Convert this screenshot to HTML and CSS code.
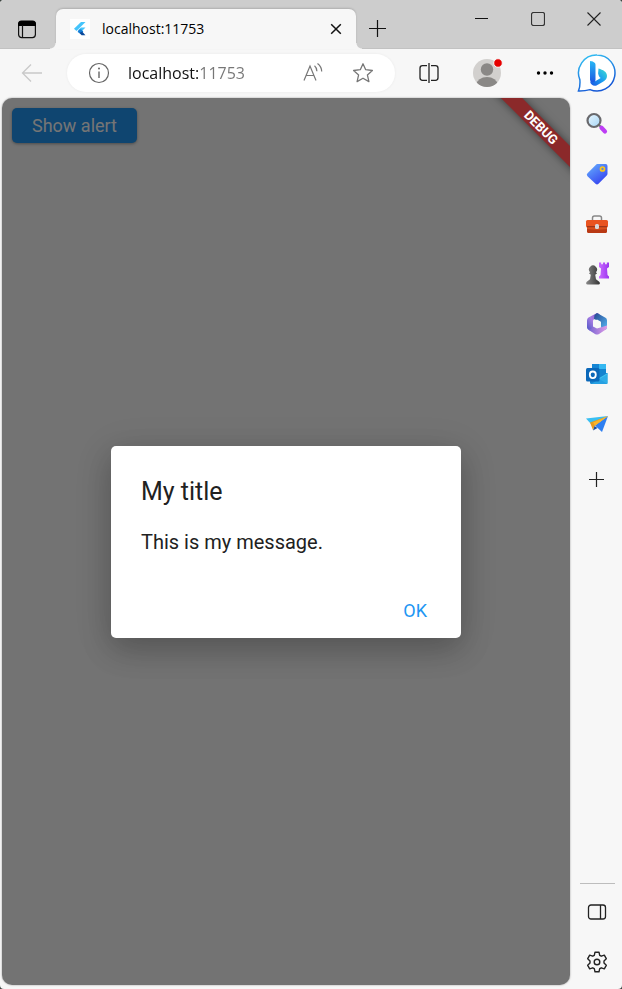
FILE: index.html
```html
<!DOCTYPE html>
<html lang="en">
<head>
<meta charset="utf-8">
<meta name="viewport" content="width=device-width, initial-scale=1">
<title>localhost:11753</title>
<link rel="stylesheet" href="styles.css">
</head>
<body>
<div class="window">
  <header class="titlebar">
    <button class="icon-button workspaces" aria-label="Tab actions">
      <svg width="20" height="20" viewBox="0 0 20 20"><rect x="1.6" y="2.6" width="16.8" height="16" rx="3" fill="none" stroke="#111" stroke-width="1.2"/><path d="M1 7V5a3.500 3.500 0 0 1 3.500-3.500h11A3.500 3.500 0 0 1 19 5v2z"/><path d="M5.500 6v12.500" stroke="#111" stroke-width="1.200"/></svg>
    </button>
    <div class="tab">
      <svg width="20" height="20" viewBox="0 0 20 20"><path fill="#fff" d="M0 0h20v20H0z"/><path fill="#45c4fb" d="M11 3h4.500L6.500 12 4 9.800z"/><path fill="#45c4fb" d="M11 8.500h4.500L11 13 8.500 10.800z"/><path fill="#1680d8" d="m8.500 11 2.500-.8 2.300 2.400-2.500 2.400-3.200-2z"/><path fill="#0b4a9b" d="m9.500 14 2.600-1.500 3.300 3.700h-3.800z"/></svg>
      <span class="tab-title">localhost:11753</span>
      <button class="icon-button tab-close" aria-label="Close tab">
        <svg width="12" height="12" viewBox="0 0 12 12"><path d="m1.200 1.200 9.600 9.600m0-9.600-9.600 9.600" stroke="#111" stroke-width="1.500"/></svg>
      </button>
    </div>
    <button class="icon-button new-tab" aria-label="New tab">
      <svg width="18" height="18" viewBox="0 0 18 18"><path d="M9.500 0v17M1 8.500h17" stroke="#111" stroke-width="1.200"/></svg>
    </button>
    <div class="window-controls">
      <button class="icon-button" aria-label="Minimize"><svg width="14" height="14" viewBox="0 0 14 14"><path d="M0 6.500h13" stroke="#111"/></svg></button>
      <button class="icon-button" aria-label="Maximize"><svg width="14" height="14" viewBox="0 0 14 14"><rect x=".5" y=".5" width="13" height="13" rx="2" fill="none" stroke="#333" stroke-width="1.200"/></svg></button>
      <button class="icon-button" aria-label="Close"><svg width="14" height="14" viewBox="0 0 14 14"><path d="m.5.5 13 13m0-13-13 13" stroke="#222" stroke-width="1.100"/></svg></button>
    </div>
  </header>

  <div class="content">
    <main class="main">
      <div class="toolbar">
        <button class="icon-button back" aria-label="Back">
          <svg width="22" height="20" viewBox="0 0 22 20" fill="none" stroke="#c9c9c9" stroke-width="1.300"><path d="M21 10H1.500M10 1.500 1.500 10l8.500 8.500"/></svg>
        </button>
        <div class="address">
          <button class="icon-button info" aria-label="Site information">
            <svg width="22" height="22" viewBox="0 0 22 22" fill="none" stroke="#666" stroke-width="1.200"><circle cx="11" cy="11" r="9.500"/><path d="M11 9.500V16" stroke-width="1.400"/><circle cx="11" cy="6.500" r="1" fill="#666" stroke="none"/></svg>
          </button>
          <input class="url" type="text" aria-label="Address" value="localhost:11753">
          <button class="icon-button" aria-label="Read aloud">
            <svg width="22" height="22" viewBox="0 0 22 22" fill="none" stroke="#777" stroke-width="1.200"><path d="M2 18.500 8 4l6 14.500M4 13.500h8M12.500 3.800c1.800 1.500 2.400 3 2.400 5.400M15.500 1.500c3 2.300 4.200 4.500 4.200 8"/></svg>
          </button>
          <button class="icon-button" aria-label="Add to favorites">
            <svg width="22" height="22" viewBox="0 0 22 22" fill="none" stroke="#777" stroke-width="1.300" stroke-linejoin="round"><path d="m11 1.800 2.700 5.900 6.700.8-5 4.400 1.500 6.700-5.900-3.400-5.900 3.400 1.500-6.700-5-4.400 6.700-.8z"/></svg>
          </button>
        </div>
        <button class="icon-button" aria-label="Split screen">
          <svg width="22" height="22" viewBox="0 0 22 22" fill="none" stroke="#222" stroke-width="1.300"><path d="M9 3.700H4.500A2.500 2.500 0 0 0 2 6.200v9.600a2.500 2.500 0 0 0 2.500 2.500H9M13 3.700h4.500A2.500 2.500 0 0 1 20 6.200v9.600a2.500 2.500 0 0 1-2.500 2.500H13M11 1v20"/></svg>
        </button>
        <button class="icon-button" aria-label="Profile">
          <svg width="32" height="32" viewBox="0 0 32 32"><defs><clipPath id="avatar"><circle cx="16" cy="16" r="14"/></clipPath></defs><circle cx="16" cy="16" r="14" fill="#d2d0ce"/><g clip-path="url(#avatar)" fill="#8a8886"><circle cx="16" cy="12.500" r="6.200"/><ellipse cx="16" cy="27.500" rx="10.500" ry="7.500"/></g><circle cx="27" cy="6" r="4.300" fill="#e60000" stroke="#f7f7f7"/></svg>
        </button>
        <button class="icon-button" aria-label="Settings and more">
          <svg width="18" height="6" viewBox="0 0 18 6"><circle cx="2.500" cy="3" r="1.700"/><circle cx="9" cy="3" r="1.700"/><circle cx="15.500" cy="3" r="1.700"/></svg>
        </button>
      </div>

      <div class="page">
        <div class="app"><button class="alert-button">Show alert</button></div>
        <div class="scrim">
          <div class="dialog" role="alertdialog" aria-labelledby="dialog-title" aria-describedby="dialog-message">
            <h1 class="dialog-title" id="dialog-title">My title</h1>
            <p class="dialog-message" id="dialog-message">This is my message.</p>
            <div class="dialog-actions"><button class="ok-button">OK</button></div>
          </div>
        </div>
        <span class="debug-banner">DEBUG</span>
      </div>
    </main>

    <aside class="sidebar">
      <button class="icon-button bing" aria-label="Bing chat">
        <svg width="42" height="42" viewBox="0 0 42 42"><defs><linearGradient id="ring" x1="0" y1="0" x2=".4" y2="1"><stop stop-color="#35c8f5"/><stop offset="1" stop-color="#1558d6"/></linearGradient><linearGradient id="b1" x1="0" y1="0" x2="0" y2="1"><stop stop-color="#28b8f5"/><stop offset="1" stop-color="#1b4fe0"/></linearGradient><linearGradient id="b2" x1="1" y1="0" x2="0" y2="1"><stop stop-color="#41e0d0"/><stop offset=".5" stop-color="#1b9df0"/><stop offset="1" stop-color="#1a51e0"/></linearGradient></defs><path d="M21 2a18 18 0 1 1-7 34.600c-3.600 1-7 1.400-11.500 1.300 1.500-3 1.700-6 1.400-11A18 18 0 0 1 21 2z" fill="#fff" stroke="url(#ring)" stroke-width="1.500"/><path d="M14 8c3 .2 5.500 1.500 5.500 4v15l-1 4c-2.500 0-4.500-2-4.500-4.700z" fill="url(#b1)"/><path d="M22.500 15.500c4.500 1.500 8.500 3 8.500 7.500 0 3-2 4.500-4 5.800L20.500 32.500c-3 1-6-.8-6.400-4 2 1.500 4 .5 6-.8l4.600-2.800c-1.500-1-2-2.500-2.600-4.500z" fill="url(#b2)"/></svg>
      </button>
      <nav class="sidebar-apps" aria-label="Sidebar apps">
        <button class="icon-button app-button" aria-label="Search">
          <svg width="24" height="24" viewBox="0 0 24 24"><defs><linearGradient id="glass" x1="0" y1="0" x2="1" y2="1"><stop stop-color="#eaf7ff"/><stop offset="1" stop-color="#a5d5f5"/></linearGradient></defs><path d="m14 13 3 3" stroke="#777" stroke-width="2"/><path d="m16.500 15.800 3.500 3.700" stroke="#bd3df4" stroke-width="4.200" stroke-linecap="round"/><circle cx="9" cy="8.500" r="6.500" fill="url(#glass)" stroke="#69696d" stroke-width="2.200"/></svg>
        </button>
        <button class="icon-button app-button" aria-label="Shopping">
          <svg width="24" height="24" viewBox="0 0 24 24"><defs><linearGradient id="tag" x1="0" y1="0" x2=".7" y2="1"><stop stop-color="#68b5ff"/><stop offset="1" stop-color="#3541ef"/></linearGradient></defs><path d="M12.500 2h8q2 0 2 2v7.700q0 1-1 2l-8 8q-1.500 1.500-3 0l-8-7.500q-1.500-1.500 0-3l8-8q1-1.200 2-1.200z" fill="url(#tag)"/><circle cx="17.500" cy="7" r="2" fill="#6386d6" stroke="#fac51b" stroke-width="1.700"/></svg>
        </button>
        <button class="icon-button app-button" aria-label="Tools">
          <svg width="24" height="24" viewBox="0 0 24 24"><path d="M7.500 9V6q0-2 2-2h5q2 0 2 2v3" fill="none" stroke="#888" stroke-width="1.500"/><rect x="1" y="8" width="22" height="7.500" rx="1.500" fill="#e95420"/><path d="M2 15h20v4.500q0 1.500-1.500 1.500h-17Q2 21 2 19.500z" fill="#b93914"/><path d="M2 15h20v2q-10 1.500-20 0z" fill="#d9501c"/><path d="M2 14.700h20" stroke="#8e2f19"/><rect x="10" y="12" width="4" height="5" rx="1.500" fill="#d8d8d8"/></svg>
        </button>
        <button class="icon-button app-button" aria-label="Games">
          <svg width="24" height="24" viewBox="0 0 24 24"><defs><linearGradient id="pawn"><stop stop-color="#888"/><stop offset="1" stop-color="#353535"/></linearGradient><linearGradient id="rook"><stop stop-color="#c96bff"/><stop offset="1" stop-color="#9c35ef"/></linearGradient></defs><path d="M14 .5h2.200v1.700h1.700V.5h2.200v1.700h1.700V.5H24V5l-2 1.500.5 6.500 1.500 1.500v2H14v-2l1.500-1.500.5-6.500-2-1.500z" fill="url(#rook)"/><path d="M5 10.200a4 4 0 1 1 6 0l1 1.300-1.800 1.300.8 4.500 3.500 2.700q1 2.500-1 2.500h-11q-2 0-1-2.500L5 17.300l.8-4.500L4 11.500z" fill="url(#pawn)"/></svg>
        </button>
        <button class="icon-button app-button" aria-label="Microsoft 365">
          <svg width="24" height="24" viewBox="0 0 24 24"><defs><linearGradient id="m1" x1="1" y1="0" x2="0" y2="1"><stop stop-color="#8656ce"/><stop offset=".5" stop-color="#a97de3"/><stop offset="1" stop-color="#4a54c5"/></linearGradient><linearGradient id="m2" x1="0" y1="0" x2="1" y2="1"><stop stop-color="#26458e"/><stop offset="1" stop-color="#56b9f5"/></linearGradient><linearGradient id="m3"><stop stop-color="#7161d1"/><stop offset="1" stop-color="#df9ce7"/></linearGradient></defs><path d="M12 1 3.500 5.500Q2 6.500 2 8.500v7q0 1.500 1.500 2.200Q8 20 8 16V9q0-1 1-1.700L15 3q-1.500-2-3-2z" fill="url(#m1)"/><path d="m12 1 8.500 4.700Q22 6.500 22 8.500v7q0 1.500-2 2.500-4 .5-4-4v-4L9 7l.5-4z" fill="url(#m2)"/><path d="M3 17.500q4 .5 5-3l4 2 10-3v2q0 1.500-1.500 2.300L14 22q-2 1-4 0z" fill="url(#m3)"/><path d="m12 7.500 3.500 2v4.500L12 16l-3.500-2V9.500z" fill="#f7f7f7"/></svg>
        </button>
        <button class="icon-button app-button" aria-label="Outlook">
          <svg width="24" height="24" viewBox="0 0 24 24"><path d="M7 2h14v9H7z" fill="#35b8f1"/><path d="M7 2h7v5H7z" fill="#1686d4"/><path d="M14 7h7v5h-7z" fill="#1484cf"/><path d="M5 11h17.500v9.500q0 1.500-1.500 1.500H6.500Q5 22 5 20.500z" fill="#1684cf"/><path d="m22.500 11-9 5.500 9 5.500z" fill="#42c4ee"/><path d="m6 22 16-9.500v8q0 1.500-1.500 1.500z" fill="#2ba8e6" opacity=".8"/><rect x="1" y="6" width="13.500" height="13.500" rx="1.500" fill="#0b68b9"/><ellipse cx="7.800" cy="12.800" rx="3" ry="3.300" fill="none" stroke="#fff" stroke-width="1.800"/></svg>
        </button>
        <button class="icon-button app-button" aria-label="Drop">
          <svg width="24" height="24" viewBox="0 0 24 24"><path d="M1 6.500 23 4 6 12z" fill="#39bff2"/><path d="M23 4 10 13.500 17 20z" fill="#2e7ff1"/><path d="m5 10.500 18-6.500L9.500 14l-1.500 4z" fill="#e79b1d"/><path d="m9.500 14 3 2L8 18.500z" fill="#174c9e"/><path d="M8 10.500 23 4 10 13.500z" fill="#f9b52a"/></svg>
        </button>
      </nav>
      <button class="icon-button add-app" aria-label="Customize sidebar">
        <svg width="16" height="16" viewBox="0 0 16 16"><path d="M7.500 0v15M0 7.500h15" stroke="#222" stroke-width="1.200"/></svg>
      </button>
      <div class="sidebar-footer">
        <button class="icon-button app-button" aria-label="Hide sidebar">
          <svg width="20" height="18" viewBox="0 0 20 18"><rect x="1.500" y="2" width="17" height="14" rx="2.500" fill="none" stroke="#222" stroke-width="1.300"/><path d="M13.500 2v14" stroke="#222" stroke-width="1.300"/></svg>
        </button>
        <button class="icon-button app-button" aria-label="Settings">
          <svg width="22" height="22" viewBox="0 0 22 22" fill="none" stroke="#222" stroke-width="1.400" stroke-linejoin="round"><path d="M9 1.200h4l.7 3.100 1.600.9 3-1 2 3.500L18 9.900v2.200l2.300 2.200-2 3.500-3-1-1.600.9-.7 3.100H9l-.7-3.100-1.600-.9-3 1-2-3.500L4 12.100V9.900L1.700 7.700l2-3.500 3 1 1.600-.9z"/><circle cx="11" cy="11" r="2.800"/></svg>
        </button>
      </div>
    </aside>
  </div>
</div>
</body>
</html>
```
FILE: styles.css
```css
* {
  box-sizing: border-box;
}

body {
  margin: 0;
  background: #3c4440;
  color: #000;
  font-family: "Open Sans", "Noto Sans", sans-serif;
}

button {
  margin: 0;
  padding: 0;
  border: 0;
  background: none;
  font: inherit;
}

svg {
  display: block;
  flex: none;
}

.window {
  display: flex;
  flex-direction: column;
  min-height: 100vh;
  overflow: hidden;
  border-radius: 4px;
  background: #f7f7f7;
}

.icon-button {
  display: flex;
  flex: none;
  align-items: center;
  justify-content: center;
  width: 50px;
  height: 40px;
}

/* Title bar */

.titlebar {
  display: flex;
  align-items: flex-end;
  height: 49px;
  background: #cdcdcd;
  box-shadow: inset 0 -1px #c2c2c2;
}

.workspaces {
  width: 54px;
}

.tab {
  position: relative;
  display: flex;
  flex: 0 1 300px;
  align-items: center;
  height: 40px;
  margin-left: 2px;
  padding: 0 4px 0 14px;
  border-radius: 7px 7px 0 0;
  background: #f7f7f7;
  box-shadow: 0 -1px 2px rgba(0, 0, 0, 0.15);
}

.tab::before,
.tab::after {
  content: "";
  position: absolute;
  bottom: 0;
  width: 6px;
  height: 6px;
}

.tab::before {
  right: 100%;
  background: radial-gradient(circle at 0 0, #cdcdcd 5px, #f7f7f7 6px);
}

.tab::after {
  left: 100%;
  background: radial-gradient(circle at 100% 0, #cdcdcd 5px, #f7f7f7 6px);
}

.tab-title {
  flex: 1;
  margin-left: 12px;
  font-size: 14px;
  line-height: 20px;
}

.tab-close {
  width: 32px;
}

.new-tab {
  width: 42px;
}

.window-controls {
  display: flex;
  align-self: flex-start;
  margin-left: auto;
}

.window-controls .icon-button {
  width: 56px;
  height: 38px;
}

/* Browser body */

.content {
  display: flex;
  flex: 1;
}

.main {
  display: flex;
  flex: 1;
  flex-direction: column;
  min-width: 0;
}

.toolbar {
  display: flex;
  align-items: center;
  gap: 8px;
  height: 48px;
  padding: 0 2px 0 7px;
}

.address {
  display: flex;
  flex: 1;
  align-items: center;
  min-width: 0;
  height: 38px;
  margin: 0 1px 0 2px;
  padding: 0 7px 0 8px;
  border-radius: 19px;
  background: #fff;
  box-shadow: 0 0 3px rgba(0, 0, 0, 0.06);
}

.url {
  flex: 1;
  min-width: 0;
  padding: 0;
  border: 0;
  outline: 0;
  background: linear-gradient(90deg, #111 70px, #767676 70px) text;
  color: transparent;
  font: 400 16px/24px "Open Sans", "Noto Sans", sans-serif;
}

.info {
  width: 48px;
  margin-right: 5px;
}

/* Web page */

.page {
  position: relative;
  display: grid;
  flex: 1;
  margin: 1px 2px 4px;
  overflow: hidden;
  border-radius: 10px;
  background: #fafafa;
  box-shadow: 0 0 2px rgba(0, 0, 0, 0.4);
  font-family: Roboto, sans-serif;
}

.app,
.scrim {
  grid-area: 1 / 1;
}

.app {
  padding: 10px;
}

.alert-button {
  height: 35px;
  padding: 0 20px;
  border-radius: 5px;
  background: #2196f3;
  box-shadow: 0 1px 3px rgba(0, 0, 0, 0.35);
  color: #fff;
  font-size: 18px;
  font-weight: 400;
  line-height: 24px;
}

.scrim {
  z-index: 1;
  display: grid;
  place-items: center;
  background: rgba(0, 0, 0, 0.54);
}

.dialog {
  min-width: 350px;
  padding: 31px 30px 6px;
  border-radius: 5px;
  background: #fff;
  box-shadow: 0 12px 30px rgba(0, 0, 0, 0.2), 0 6px 40px rgba(0, 0, 0, 0.1);
  color: #212121;
}

.dialog-title {
  margin: 0 0 20px;
  font-size: 25px;
  font-weight: 400;
  line-height: 30px;
}

.dialog-message {
  margin: 0 0 33px;
  font-size: 20px;
  line-height: 30px;
}

.dialog-actions {
  display: flex;
  justify-content: flex-end;
}

.ok-button {
  height: 42px;
  padding: 0 4px;
  color: #2196f3;
  font-size: 18px;
  font-weight: 400;
  line-height: 24px;
}

.debug-banner {
  position: absolute;
  top: 22px;
  right: -31px;
  z-index: 2;
  width: 120px;
  transform: rotate(45deg);
  background: #8b292a;
  box-shadow: 0 0 8px rgba(0, 0, 0, 0.5);
  color: #fff;
  font-size: 13px;
  font-weight: 700;
  line-height: 15px;
  text-align: center;
}

/* Sidebar */

.sidebar {
  display: flex;
  flex: none;
  flex-direction: column;
  width: 50px;
}

.bing {
  height: 50px;
}

.app-button {
  height: 50px;
}

.add-app {
  margin: 11px 0 20px;
}

.sidebar-footer {
  margin-top: auto;
  padding: 4px 0 2px;
  background: linear-gradient(#bdbdbd, #bdbdbd) 8px 0 / 35px 1px no-repeat;
}
```
